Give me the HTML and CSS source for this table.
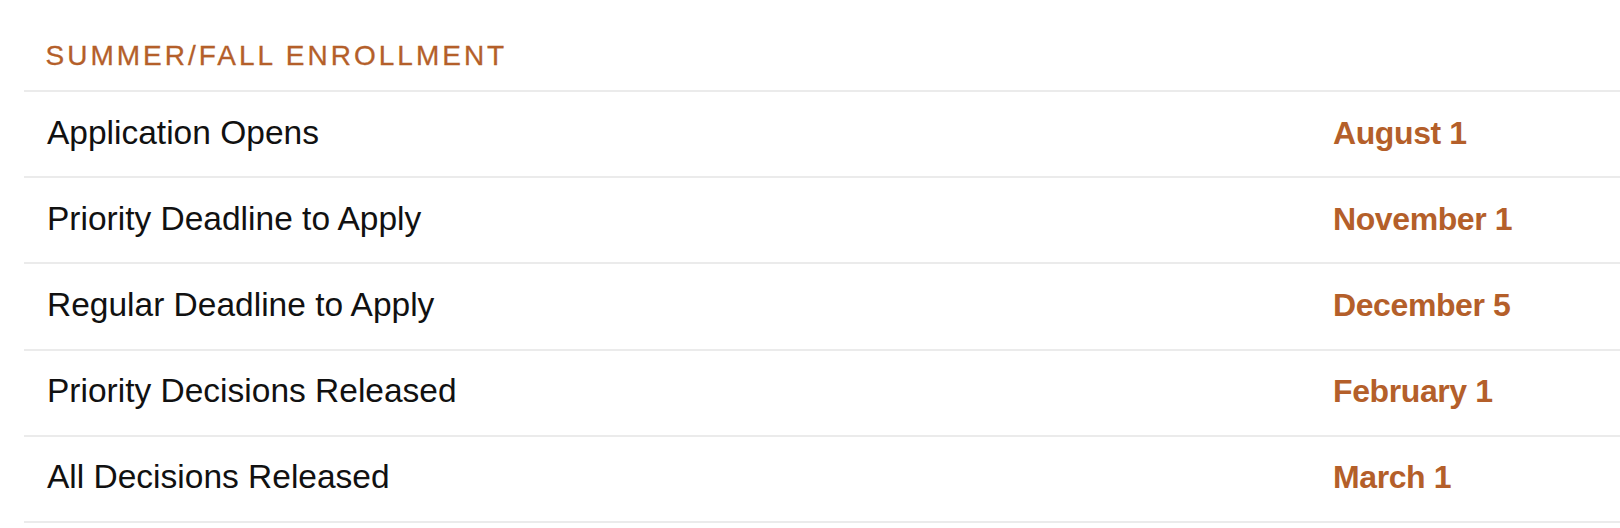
FILE: index.html
```html
<!DOCTYPE html>
<html lang="en">
<head>
<meta charset="utf-8">
<title>Summer/Fall Enrollment</title>
<link rel="stylesheet" href="styles.css">
</head>
<body>
<section class="schedule">
  <h2 class="schedule-title">SUMMER/FALL ENROLLMENT</h2>
  <ul class="schedule-list">
    <li class="schedule-row"><span class="event">Application Opens</span><span class="date">August 1</span></li>
    <li class="schedule-row"><span class="event">Priority Deadline to Apply</span><span class="date">November 1</span></li>
    <li class="schedule-row"><span class="event">Regular Deadline to Apply</span><span class="date">December 5</span></li>
    <li class="schedule-row"><span class="event">Priority Decisions Released</span><span class="date">February 1</span></li>
    <li class="schedule-row"><span class="event">All Decisions Released</span><span class="date">March 1</span></li>
  </ul>
</section>
</body>
</html>
```

FILE: styles.css
```css
html, body {
  margin: 0;
  padding: 0;
  background: #ffffff;
}

body {
  font-family: "Liberation Sans", Arial, sans-serif;
  color: #111111;
  overflow: hidden;
}

.schedule {
  padding-left: 24px;
}

.schedule-title {
  margin: 0;
  padding: 42px 0 20px 21.5px;
  font-size: 28px;
  line-height: 28px;
  font-weight: 400;
  letter-spacing: 3px;
  color: #b45f2a;
  -webkit-text-stroke: 0.3px #b45f2a;
}

.schedule-list {
  list-style: none;
  margin: 0;
  padding: 0;
  border-top: 2px solid #ebebeb;
}

.schedule-row {
  display: grid;
  grid-template-columns: 1286px 1fr;
  align-items: baseline;
  padding: 23.5px 0 26.7px 23px;
  border-bottom: 2px solid #ebebeb;
  font-size: 33.5px;
  line-height: 34px;
}

.event {
  color: #111111;
}

.date {
  color: #b45f2a;
  font-weight: 700;
  font-size: 32px;
  letter-spacing: -0.4px;
}
```
